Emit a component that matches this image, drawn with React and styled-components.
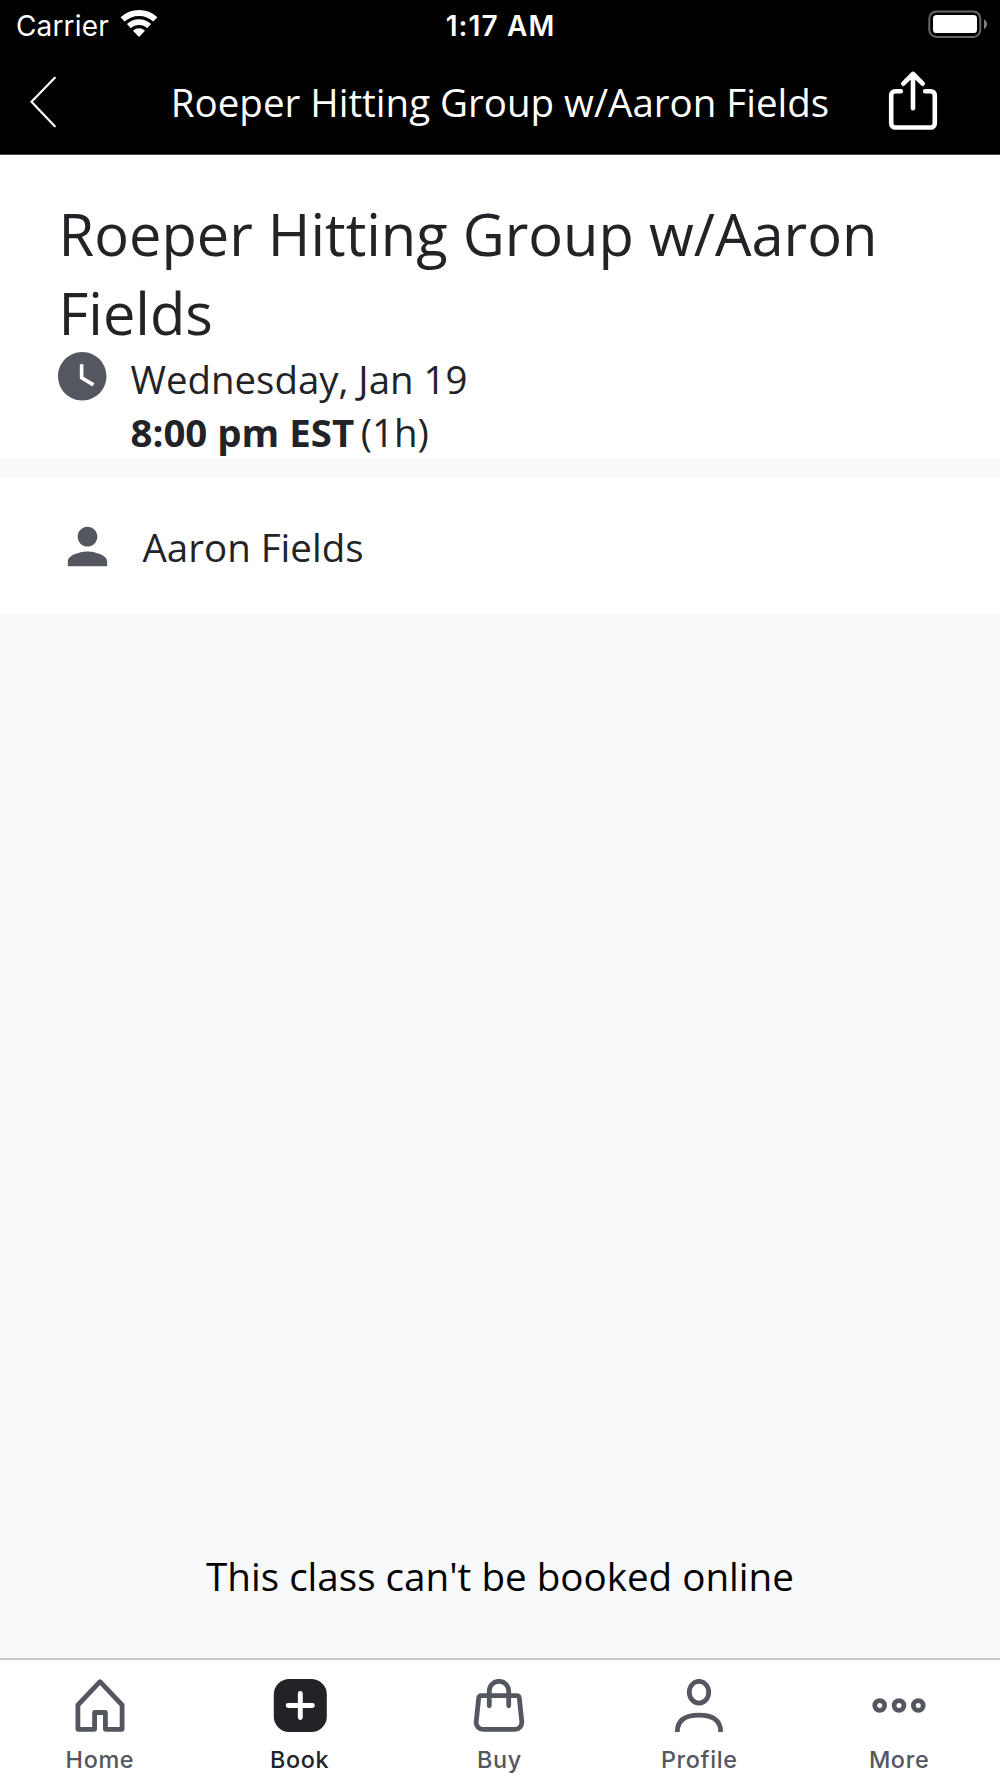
import React from "react";
import styled, { createGlobalStyle } from "styled-components";

const GlobalStyle = createGlobalStyle`
  * {
    box-sizing: border-box;
  }

  body {
    margin: 0;
    background: #f8f9fb;
    font-family: "Open Sans", "Noto Sans", sans-serif;
    color: #212327;
  }

  svg {
    display: block;
    flex: none;
  }
`;

const Screen = styled.div`
  display: flex;
  flex-direction: column;
  width: 1000px;
  height: 1778px;
  overflow: hidden;
`;

const Header = styled.header`
  height: 155px;
  background: #000;
  border-bottom: 1px solid #4a4649;
  color: #fff;
`;

const StatusBar = styled.div`
  display: grid;
  grid-template-columns: 1fr auto 1fr;
  height: 50px;
  padding: 0 12px;
  font-family: Inter, "Liberation Sans", sans-serif;
  font-size: 28px;
  line-height: 52px;
`;

const Carrier = styled.div`
  display: flex;
  gap: 11px;
  padding-left: 4px;
  letter-spacing: 0.15px;
`;

const Time = styled.div`
  padding-left: 1px;
  font-weight: 600;
  letter-spacing: 1.1px;
`;

const Battery = styled.div`
  display: flex;
  justify-content: flex-end;
`;

const NavBar = styled.nav`
  display: grid;
  grid-template-columns: 120px 1fr 120px;
  height: 104px;
`;

const NavTitle = styled.div`
  font-size: 38.5px;
  line-height: 104px;
  text-align: center;
  white-space: nowrap;
`;

const NavButton = styled.button`
  padding: 0;
  border: 0;
  background: none;
  color: inherit;
`;

const Summary = styled.section`
  height: 304px;
  padding: 39px 58px 0;
  background: #fff;
`;

const Title = styled.h1`
  margin: 0;
  padding-left: 0.5px;
  font-size: 57.8px;
  font-weight: 400;
  line-height: 79px;
`;

const When = styled.div`
  display: flex;
  gap: 24px;
  font-size: 38.4px;
  line-height: 53px;
`;

const WhenText = styled.div`
  padding-top: 1px;
`;

const Duration = styled.span`
  margin-left: 6.5px;
`;

const Staff = styled.section`
  display: flex;
  align-items: center;
  gap: 26px;
  height: 136px;
  margin-top: 19px;
  padding: 1px 57.5px 0;
  background: #fff;
  font-size: 38.5px;
`;

const Notice = styled.p`
  margin: auto 0 0;
  height: 108px;
  color: #000;
  font-size: 38.6px;
  line-height: 53px;
  text-align: center;
`;

const TabBar = styled.nav`
  display: flex;
  height: 120px;
  padding-right: 1px;
  border-top: 2px solid #c9cacc;
  background: #fff;
`;

const Tab = styled.a`
  display: flex;
  flex: 1;
  flex-direction: column;
  align-items: center;
  gap: 13px;
  padding-top: 19px;
  color: ${props => (props.$active ? "#212327" : "#555760")};
  font-family: Inter, "Liberation Sans", sans-serif;
  font-size: 23.4px;
  font-weight: 500;
  line-height: 28px;
`;

const TabLabel = styled.span`
  letter-spacing: 0.65px;
`;

const WifiIcon = () => (
  <svg width="38" height="50" viewBox="0 0 38 50" fill="none" stroke="#fff">
    <path d="M2.6 19.4a24 24 0 0 1 32.8 0" strokeWidth="6" />
    <path d="M8.9 26.2a14.8 14.8 0 0 1 20.2 0" strokeWidth="5.7" />
    <path d="M19 37l-6-6.3a8.7 8.7 0 0 1 12 0z" fill="#fff" stroke="none" />
  </svg>
);

const BatteryIcon = () => (
  <svg width="60" height="50" viewBox="0 0 60 50">
    <rect x="1.3" y="11.5" width="51" height="25.4" rx="7" fill="none" stroke="#666" strokeWidth="2" />
    <rect x="5" y="15" width="44" height="18" rx="3.6" fill="#fff" />
    <path d="M56 19.3c4 2 4 7.8 0 9.8z" fill="#808080" />
  </svg>
);

const BackIcon = () => (
  <svg width="120" height="104" viewBox="0 50 120 104" fill="none" stroke="#fff" strokeWidth="2.2" strokeLinecap="round">
    <path d="M54.8 77.8L31.5 101.8l23.3 24.4" />
  </svg>
);

const ShareIcon = () => (
  <svg
    width="120"
    height="104"
    viewBox="880 50 120 104"
    fill="none"
    stroke="#fff"
    strokeWidth="4.6"
    strokeLinecap="round"
    strokeLinejoin="round"
  >
    <path d="M900.8 91.2h-5.6a4 4 0 0 0-4 4v28.3a4 4 0 0 0 4 4h35.6a4 4 0 0 0 4-4V95.2a4 4 0 0 0-4-4h-5.6" />
    <path d="M913 108.3V74M903.3 83.7l9.7-9.7 9.7 9.7" />
  </svg>
);

const ClockIcon = () => (
  <svg width="48.5" height="48.5" viewBox="2 2 20 20" fill="#555760">
    <path d="M12 2C6.5 2 2 6.5 2 12s4.5 10 10 10 10-4.5 10-10S17.5 2 12 2zm4.2 14.2L11 13V7h1.5v5.2l4.5 2.7-.8 1.3z" />
  </svg>
);

const PersonIcon = () => (
  <svg width="59" height="59" viewBox="0 0 24 24" fill="#555760">
    <path d="M12 12c2.21 0 4-1.79 4-4s-1.79-4-4-4-4 1.79-4 4 1.79 4 4 4zm0 2c-2.67 0-8 1.34-8 4v2h16v-2c0-2.66-5.33-4-8-4z" />
  </svg>
);

const TabIcon = ({ children }) => (
  <svg
    width="54"
    height="54"
    viewBox="0 0 54 54"
    fill="none"
    stroke="currentColor"
    strokeWidth="4.8"
    strokeLinejoin="round"
  >
    {children}
  </svg>
);

const tabs = [
  {
    label: "Home",
    icon: <path d="M27 2.7L49.1 26v24.3H32.4V33.5H21.6v16.8H4.9V26z" />
  },
  {
    label: "Book",
    active: true,
    icon: (
      <>
        <rect x="0.8" y="0" width="53" height="53" rx="15.5" fill="currentColor" stroke="none" />
        <path d="M27.3 14.4v24.2M15.2 26.5h24.2" stroke="#fff" strokeWidth="4.9" strokeLinecap="round" />
      </>
    )
  },
  {
    label: "Buy",
    icon: (
      <>
        <path d="M9.5 16.6h35a2.8 2.8 0 0 1 2.8 2.5l2.5 23.6a7 7 0 0 1-7 7.7H11.2a7 7 0 0 1-7-7.7l2.5-23.6a2.8 2.8 0 0 1 2.8-2.5z" />
        <path d="M17.3 26.8V12a9.7 9.7 0 0 1 19.4 0v14.8" strokeLinecap="round" />
      </>
    )
  },
  {
    label: "Profile",
    icon: (
      <>
        <ellipse cx="27" cy="13.2" rx="9.7" ry="10.9" />
        <path d="M5.3 53C5.3 40.5 14 36.2 27 36.2S48.7 40.5 48.7 53" />
      </>
    )
  },
  {
    label: "More",
    icon: (
      <>
        <circle cx="7.7" cy="26.5" r="4.9" />
        <circle cx="27" cy="26.5" r="4.9" />
        <circle cx="46.3" cy="26.5" r="4.9" />
      </>
    )
  }
];

const App = () => (
  <Screen>
    <GlobalStyle />
    <Header>
      <StatusBar>
        <Carrier>
          Carrier
          <WifiIcon />
        </Carrier>
        <Time>1:17 AM</Time>
        <Battery>
          <BatteryIcon />
        </Battery>
      </StatusBar>
      <NavBar>
        <NavButton aria-label="Back">
          <BackIcon />
        </NavButton>
        <NavTitle>Roeper Hitting Group w/Aaron Fields</NavTitle>
        <NavButton aria-label="Share">
          <ShareIcon />
        </NavButton>
      </NavBar>
    </Header>
    <Summary>
      <Title>Roeper Hitting Group w/Aaron Fields</Title>
      <When>
        <ClockIcon />
        <WhenText>
          <div>Wednesday, Jan 19</div>
          <div>
            <strong>8:00 pm EST</strong>
            <Duration>(1h)</Duration>
          </div>
        </WhenText>
      </When>
    </Summary>
    <Staff>
      <PersonIcon />
      Aaron Fields
    </Staff>
    <Notice>This class can't be booked online</Notice>
    <TabBar>
      {tabs.map(tab => (
        <Tab key={tab.label} $active={tab.active}>
          <TabIcon>{tab.icon}</TabIcon>
          <TabLabel>{tab.label}</TabLabel>
        </Tab>
      ))}
    </TabBar>
  </Screen>
);

export default App;
